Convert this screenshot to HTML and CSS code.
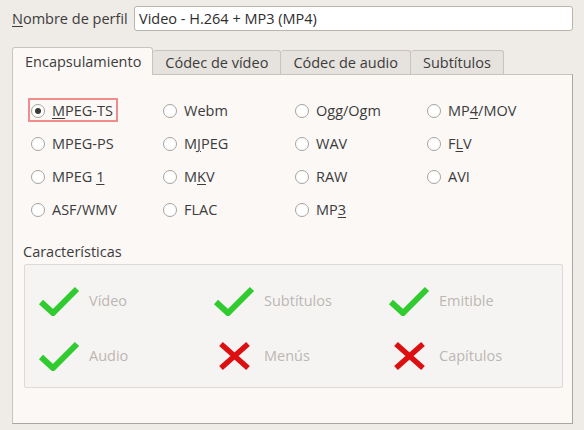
FILE: index.html
```html
<!DOCTYPE html>
<html>
<head>
<meta charset="utf-8">
<link rel="stylesheet" href="styles.css">
</head>
<body>
<div class="win">
  <div class="name-row">
    <label class="name-label"><u>N</u>ombre de perfil</label>
    <div class="entry">Video - H.264 + MP3 (MP4)</div>
  </div>
  <div class="tabs">
    <div class="tab active">Encapsulamiento</div>
    <div class="tab">Códec de vídeo</div>
    <div class="tab">Códec de audio</div>
    <div class="tab">Subtítulos</div>
  </div>
  <div class="panel">
    <div class="radios">
      <div class="radio focus"><span class="dot on"></span><span><u>M</u>PEG-TS</span></div>
      <div class="radio"><span class="dot"></span><span>Webm</span></div>
      <div class="radio"><span class="dot"></span><span>Ogg/Ogm</span></div>
      <div class="radio"><span class="dot"></span><span>MP<u>4</u>/MOV</span></div>
      <div class="radio"><span class="dot"></span><span>MPEG-PS</span></div>
      <div class="radio"><span class="dot"></span><span>M<u>J</u>PEG</span></div>
      <div class="radio"><span class="dot"></span><span>WAV</span></div>
      <div class="radio"><span class="dot"></span><span>F<u>L</u>V</span></div>
      <div class="radio"><span class="dot"></span><span>MPEG <u>1</u></span></div>
      <div class="radio"><span class="dot"></span><span>M<u>K</u>V</span></div>
      <div class="radio"><span class="dot"></span><span>RAW</span></div>
      <div class="radio"><span class="dot"></span><span>AVI</span></div>
      <div class="radio"><span class="dot"></span><span>ASF/WMV</span></div>
      <div class="radio"><span class="dot"></span><span>FLAC</span></div>
      <div class="radio"><span class="dot"></span><span>MP<u>3</u></span></div>
    </div>
    <div class="feat-title">Características</div>
    <div class="feat-box">
      <div class="feat"><svg class="ico" viewBox="0 0 42 30"><polyline points="3,16 15,27 39,3" class="ok"/></svg><span>Vídeo</span></div>
      <div class="feat"><svg class="ico" viewBox="0 0 42 30"><polyline points="3,16 15,27 39,3" class="ok"/></svg><span>Subtítulos</span></div>
      <div class="feat"><svg class="ico" viewBox="0 0 42 30"><polyline points="3,16 15,27 39,3" class="ok"/></svg><span>Emitible</span></div>
      <div class="feat"><svg class="ico" viewBox="0 0 42 30"><polyline points="3,16 15,27 39,3" class="ok"/></svg><span>Audio</span></div>
      <div class="feat"><svg class="ico" viewBox="0 0 42 30"><path d="M8,3 L35,27 M35,3 L8,27" class="no"/></svg><span>Menús</span></div>
      <div class="feat"><svg class="ico" viewBox="0 0 42 30"><path d="M8,3 L35,27 M35,3 L8,27" class="no"/></svg><span>Capítulos</span></div>
    </div>
  </div>
</div>
</body>
</html>
```
FILE: styles.css
```css
html, body {
  margin: 0;
  padding: 0;
  background: #efebe7;
}
body {
  width: 584px;
  height: 430px;
  overflow: hidden;
  font-family: "Open Sans", "Noto Sans", sans-serif;
  font-size: 14.5px;
  color: #3c3c3c;
}
u {
  text-decoration: underline;
  text-underline-offset: 2px;
}
.win {
  padding: 6px 11px 0 12px;
}
.name-row {
  display: flex;
  align-items: center;
  height: 25px;
}
.name-label {
  width: 122px;
  flex: none;
}
.entry {
  flex: 1;
  height: 23px;
  line-height: 23px;
  border: 1px solid #b9b4ae;
  border-radius: 3px;
  background: #ffffff;
  padding: 0 4px;
  color: #2e2e2e;
}
.tabs {
  display: flex;
  align-items: flex-end;
  margin-top: 16px;
  height: 27px;
}
.tab {
  height: 23px;
  line-height: 23px;
  padding: 0 12px;
  background: #e6e2de;
  border: 1px solid #c8c3be;
  border-bottom: none;
  border-left: none;
  border-radius: 3px 3px 0 0;
}
.tab.active {
  height: 27px;
  line-height: 27px;
  background: #fbf8f6;
  border-left: 1px solid #c8c3be;
  position: relative;
  top: 1px;
  padding: 0 11px 0 12px;
}
.panel {
  background: #fbf8f6;
  border: 1px solid #c8c3be;
  border-right-color: #a9a5a1;
  border-bottom-color: #a9a5a1;
  height: 350px;
  box-sizing: border-box;
  padding: 19px 10px 0 18px;
}
.radios {
  display: grid;
  grid-template-columns: repeat(4, 132px);
  grid-auto-rows: 33px;
}
.radio {
  display: flex;
  align-items: center;
  gap: 7px;
  justify-self: start;
  position: relative;
}
.radio.focus::before {
  content: "";
  position: absolute;
  left: -3px;
  right: -5px;
  top: 4px;
  bottom: 5px;
  border: 2px solid #f08c8c;
}
.dot {
  width: 12px;
  height: 12px;
  border: 1px solid #a6a29e;
  border-radius: 50%;
  background: #ffffff;
  flex: none;
  position: relative;
}
.dot.on::after {
  content: "";
  position: absolute;
  left: 3px;
  top: 3px;
  width: 6px;
  height: 6px;
  border-radius: 50%;
  background: #3a3a3a;
}
.feat-title {
  margin-top: 16px;
  margin-left: -8px;
  height: 22px;
  line-height: 20px;
}
.feat-box {
  margin-left: -7px;
  width: 539px;
  height: 124px;
  box-sizing: border-box;
  border: 1px solid #ddd9d5;
  background: #f6f4f2;
  border-radius: 2px;
  display: grid;
  grid-template-columns: 175px 175px 1fr;
  grid-template-rows: 55px 55px;
  padding: 8px 0 0 13px;
}
.feat {
  display: flex;
  align-items: center;
  gap: 9px;
  color: #bcb7b3;
}
.ico {
  width: 42px;
  height: 30px;
  flex: none;
}
.ok {
  fill: none;
  stroke: #2fcb2f;
  stroke-width: 6;
}
.no {
  fill: none;
  stroke: #dc1010;
  stroke-width: 5.5;
}
```
